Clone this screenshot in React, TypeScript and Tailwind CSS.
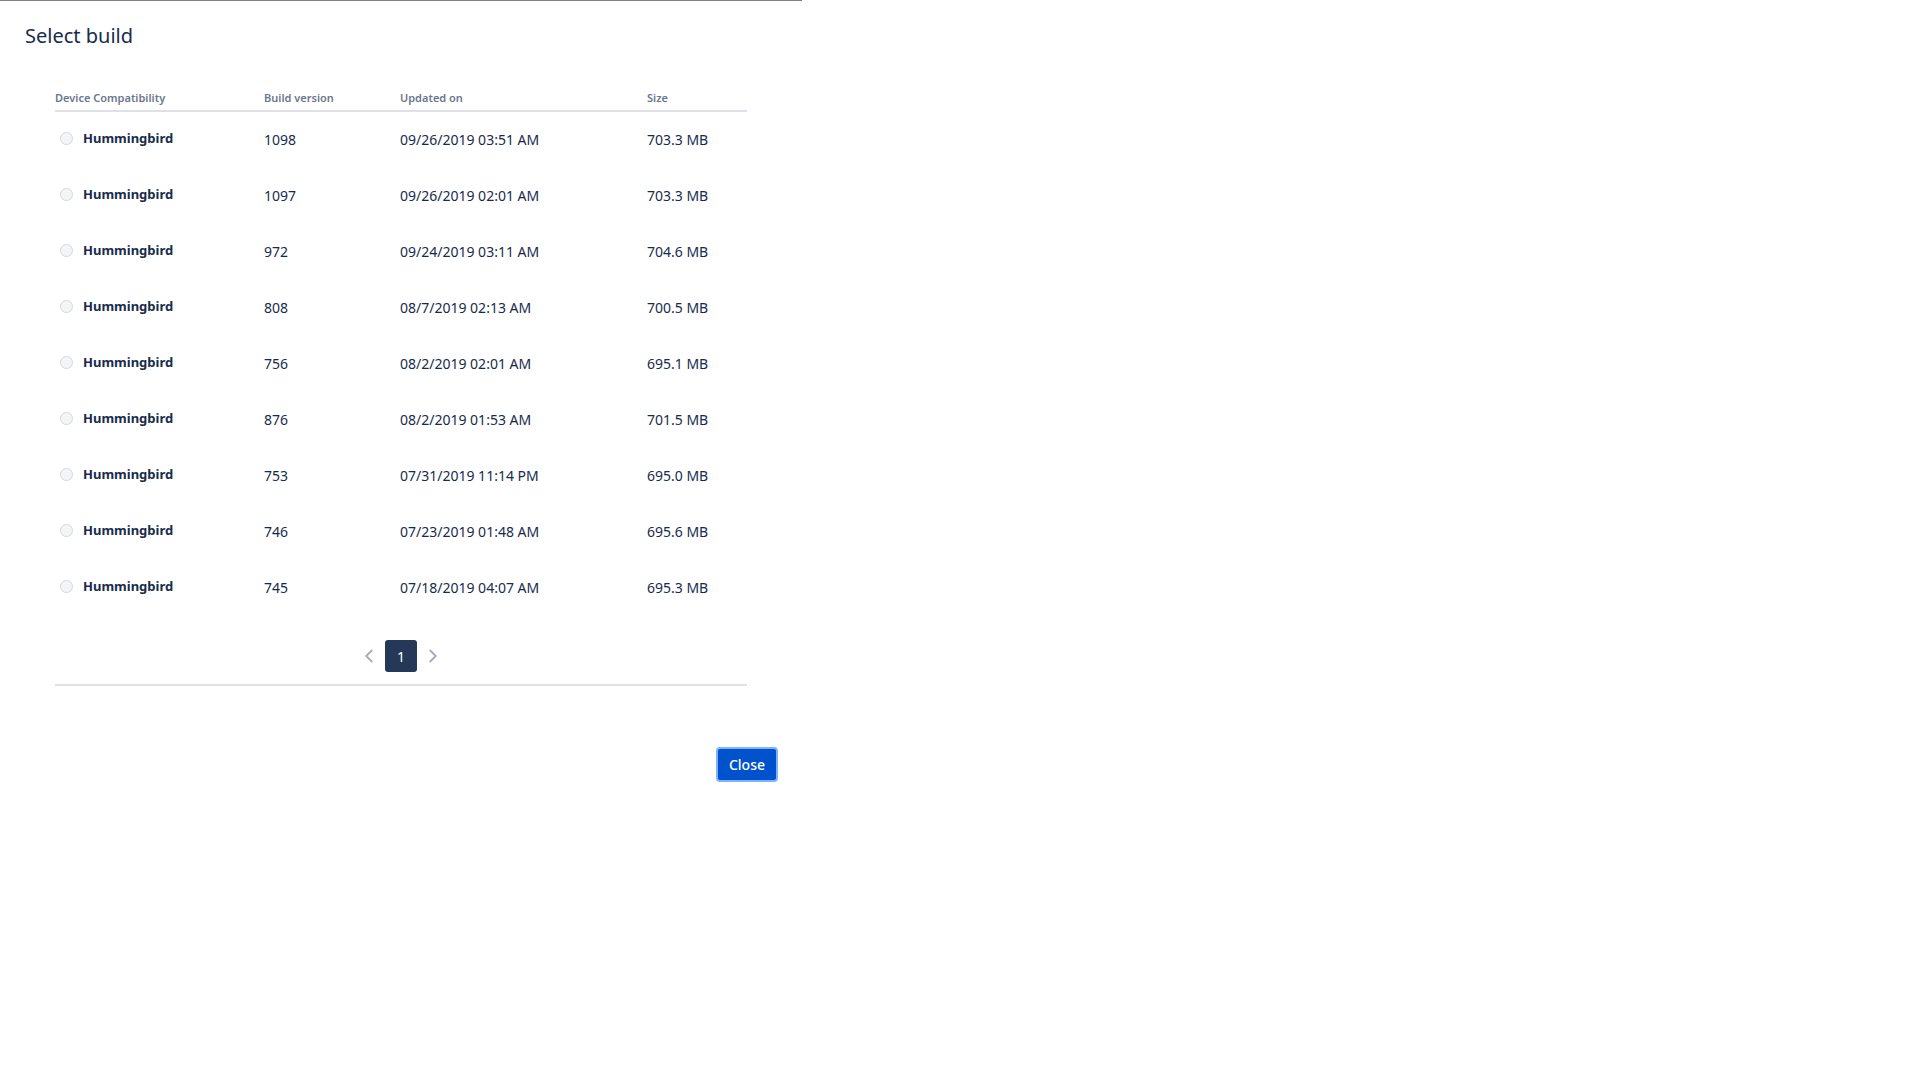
import React from 'react';
import { ChevronLeft, ChevronRight } from 'lucide-react';

const builds = [
   { name: 'Hummingbird', version: '1098', updated: '09/26/2019 03:51 AM', size: '703.3 MB' },
   { name: 'Hummingbird', version: '1097', updated: '09/26/2019 02:01 AM', size: '703.3 MB' },
   { name: 'Hummingbird', version: '972', updated: '09/24/2019 03:11 AM', size: '704.6 MB' },
   { name: 'Hummingbird', version: '808', updated: '08/7/2019 02:13 AM', size: '700.5 MB' },
   { name: 'Hummingbird', version: '756', updated: '08/2/2019 02:01 AM', size: '695.1 MB' },
   { name: 'Hummingbird', version: '876', updated: '08/2/2019 01:53 AM', size: '701.5 MB' },
   { name: 'Hummingbird', version: '753', updated: '07/31/2019 11:14 PM', size: '695.0 MB' },
   { name: 'Hummingbird', version: '746', updated: '07/23/2019 01:48 AM', size: '695.6 MB' },
   { name: 'Hummingbird', version: '745', updated: '07/18/2019 04:07 AM', size: '695.3 MB' },
];

const cols = 'grid grid-cols-[209px_136px_247px_1fr]';

const App = () => {
   return (
      <div className="min-h-screen bg-white font-['Noto_Sans',sans-serif] text-[#172b4d]">

         {/* Modal */}
         <div className="w-[802px] h-[804px] bg-white border-t border-[#7a8090] flex flex-col">

            <h2 className="px-[25px] pt-[21px] text-[20px] leading-[28px] font-normal">Select build</h2>

            <div className="mx-[55px] mt-[40px]">
               {/* Header */}
               <div className={`${cols} pb-[4px] border-b-2 border-[#dfe1e6] text-[11px] leading-[16px] font-semibold text-[#6b778c]`}>
                  <div>Device Compatibility</div>
                  <div>Build version</div>
                  <div>Updated on</div>
                  <div>Size</div>
               </div>

               {/* Rows */}
               {builds.map((b, i) => (
                  <div key={i} className={`${cols} h-[56px] items-center text-[14px] leading-[18px]`}>
                     <label className="flex items-center gap-[10px] pl-[5px] pb-[4px] cursor-pointer">
                        <span className="w-[13px] h-[13px] rounded-full border border-[#d3d6dc] bg-[#f4f5f7] shrink-0" />
                        <span className="font-bold text-[13px]">{b.name}</span>
                     </label>
                     <div>{b.version}</div>
                     <div>{b.updated}</div>
                     <div>{b.size}</div>
                  </div>
               ))}

               {/* Pagination */}
               <div className="mt-[24px] flex items-center justify-center gap-1">
                  <button className="w-[24px] h-[32px] flex items-center justify-center text-[#a5adba]">
                     <ChevronLeft size={22} strokeWidth={2} />
                  </button>
                  <button className="w-[32px] h-[32px] rounded-[3px] bg-[#253858] text-white text-[14px] flex items-center justify-center">1</button>
                  <button className="w-[24px] h-[32px] flex items-center justify-center text-[#a5adba]">
                     <ChevronRight size={22} strokeWidth={2} />
                  </button>
               </div>
               <div className="mt-[12px] border-b-2 border-[#dfe1e6]" />
            </div>

            {/* Footer */}
            <div className="mt-[61px] pr-[24px] flex justify-end">
               <button className="w-[62px] h-[35px] rounded-[4px] bg-[#0052cc] border-2 border-[#80b3ff] text-white text-[14px] font-medium flex items-center justify-center">
                  Close
               </button>
            </div>
         </div>

      </div>
   );
};

export default App;
